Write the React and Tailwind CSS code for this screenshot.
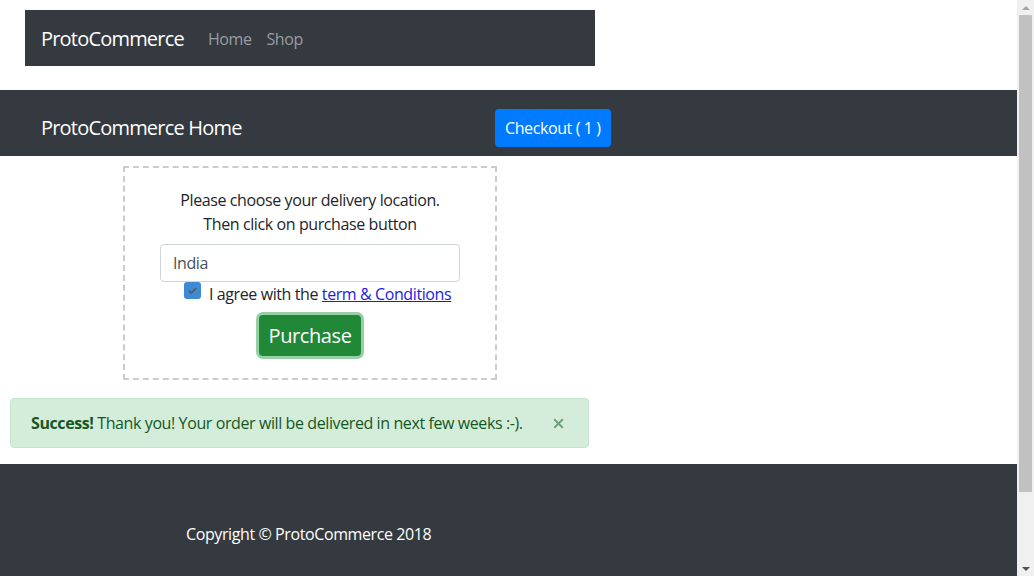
import { X } from "lucide-react";

const font = { fontFamily: '"Open Sans", "Noto Sans", sans-serif' };

function Scrollbar() {
  return (
    <div className="w-[17px] h-full bg-[#f0f0f0] flex flex-col items-center">
      <div className="h-[15px] flex items-center justify-center">
        <div className="w-0 h-0 border-l-[4px] border-r-[4px] border-b-[4px] border-l-transparent border-r-transparent border-b-[#a3a3a3]" />
      </div>
      <div className="w-[13px] h-[477px] bg-[#c1c1c1]" />
      <div className="flex-1" />
      <div className="h-[15px] flex items-center justify-center">
        <div className="w-0 h-0 border-l-[4px] border-r-[4px] border-t-[4px] border-l-transparent border-r-transparent border-t-[#505050]" />
      </div>
    </div>
  );
}

export default function App() {
  return (
    <div className="w-[1034px] h-[576px] overflow-hidden flex bg-white tracking-[-0.025em]" style={font}>
      <div className="w-[1017px] flex flex-col">
        {/* Top navbar */}
        <div className="pt-[10px] pl-[25px]">
          <nav className="w-[570px] h-[56px] bg-[#343a40] flex items-center px-4 pt-[2px]">
            <span className="text-white text-[20px] tracking-[-0.04em] mr-6">ProtoCommerce</span>
            <span className="text-[#9a9da0] text-[16px] mr-[15px]">Home</span>
            <span className="text-[#9a9da0] text-[16px]">Shop</span>
          </nav>
        </div>

        {/* Header band */}
        <div className="mt-[24px] h-[66px] bg-[#343a40] flex items-center pl-[41px] pt-[10px]">
          <span className="text-white text-[20px] tracking-[-0.04em] w-[454px]">ProtoCommerce Home</span>
          <button className="h-[38px] px-[10px] rounded-[4px] bg-[#007bff] text-white text-[16px]">
            Checkout ( 1 )
          </button>
        </div>

        {/* Delivery box */}
        <div className="mt-[10px] ml-[123px] w-[374px] h-[214px] border-2 border-dashed border-[#cccccc] flex flex-col pt-[20px]">
          <p className="text-center text-[16px] leading-6 text-[#212529]">
            Please choose your delivery location.
            <br />
            Then click on purchase button
          </p>
          <div className="mt-2 ml-[35px] w-[300px] h-[38px] border border-[#ced4da] rounded-[4px] flex items-center px-3 text-[16px] text-[#495057]">
            India
          </div>
          <div className="ml-[59px] flex items-center h-[24px]">
            <div className="w-[17px] h-[17px] rounded-[3px] bg-[#3f8ad4] flex items-center justify-center -mt-[7px]">
              <svg width="11" height="11" viewBox="0 0 12 12">
                <path d="M2 6.2l2.6 2.6L10 3.4" fill="none" stroke="#5a5a5a" strokeWidth="2" />
              </svg>
            </div>
            <span className="ml-2 text-[16px] text-[#212529]">
              I agree with the{" "}
              <a className="text-[#1a1ae6] underline">term &amp; Conditions</a>
            </span>
          </div>
          <div className="mt-[9px] flex justify-center">
            <button className="w-[102px] h-[41px] rounded-[4px] bg-[#218838] text-white text-[20px] ring-[3px] ring-[#95d1a4]">
              Purchase
            </button>
          </div>
        </div>

        {/* Alert */}
        <div className="mt-[18px] ml-[10px] w-[579px] h-[50px] bg-[#d4edda] border border-[#c3e6cb] rounded-[4px] flex items-center pl-[20px] pr-[22px] text-[16px] text-[#155724]">
          <span className="flex-1">
            <b>Success!</b> Thank you! Your order will be delivered in next few weeks :-).
          </span>
          <X size={15} strokeWidth={3} className="text-[#6f9e7a]" />
        </div>

        {/* Footer */}
        <footer className="mt-[16px] flex-1 bg-[#343a40] pl-[186px] pt-[58px]">
          <span className="text-white text-[16px]">Copyright © ProtoCommerce 2018</span>
        </footer>
      </div>
      <Scrollbar />
    </div>
  );
}
